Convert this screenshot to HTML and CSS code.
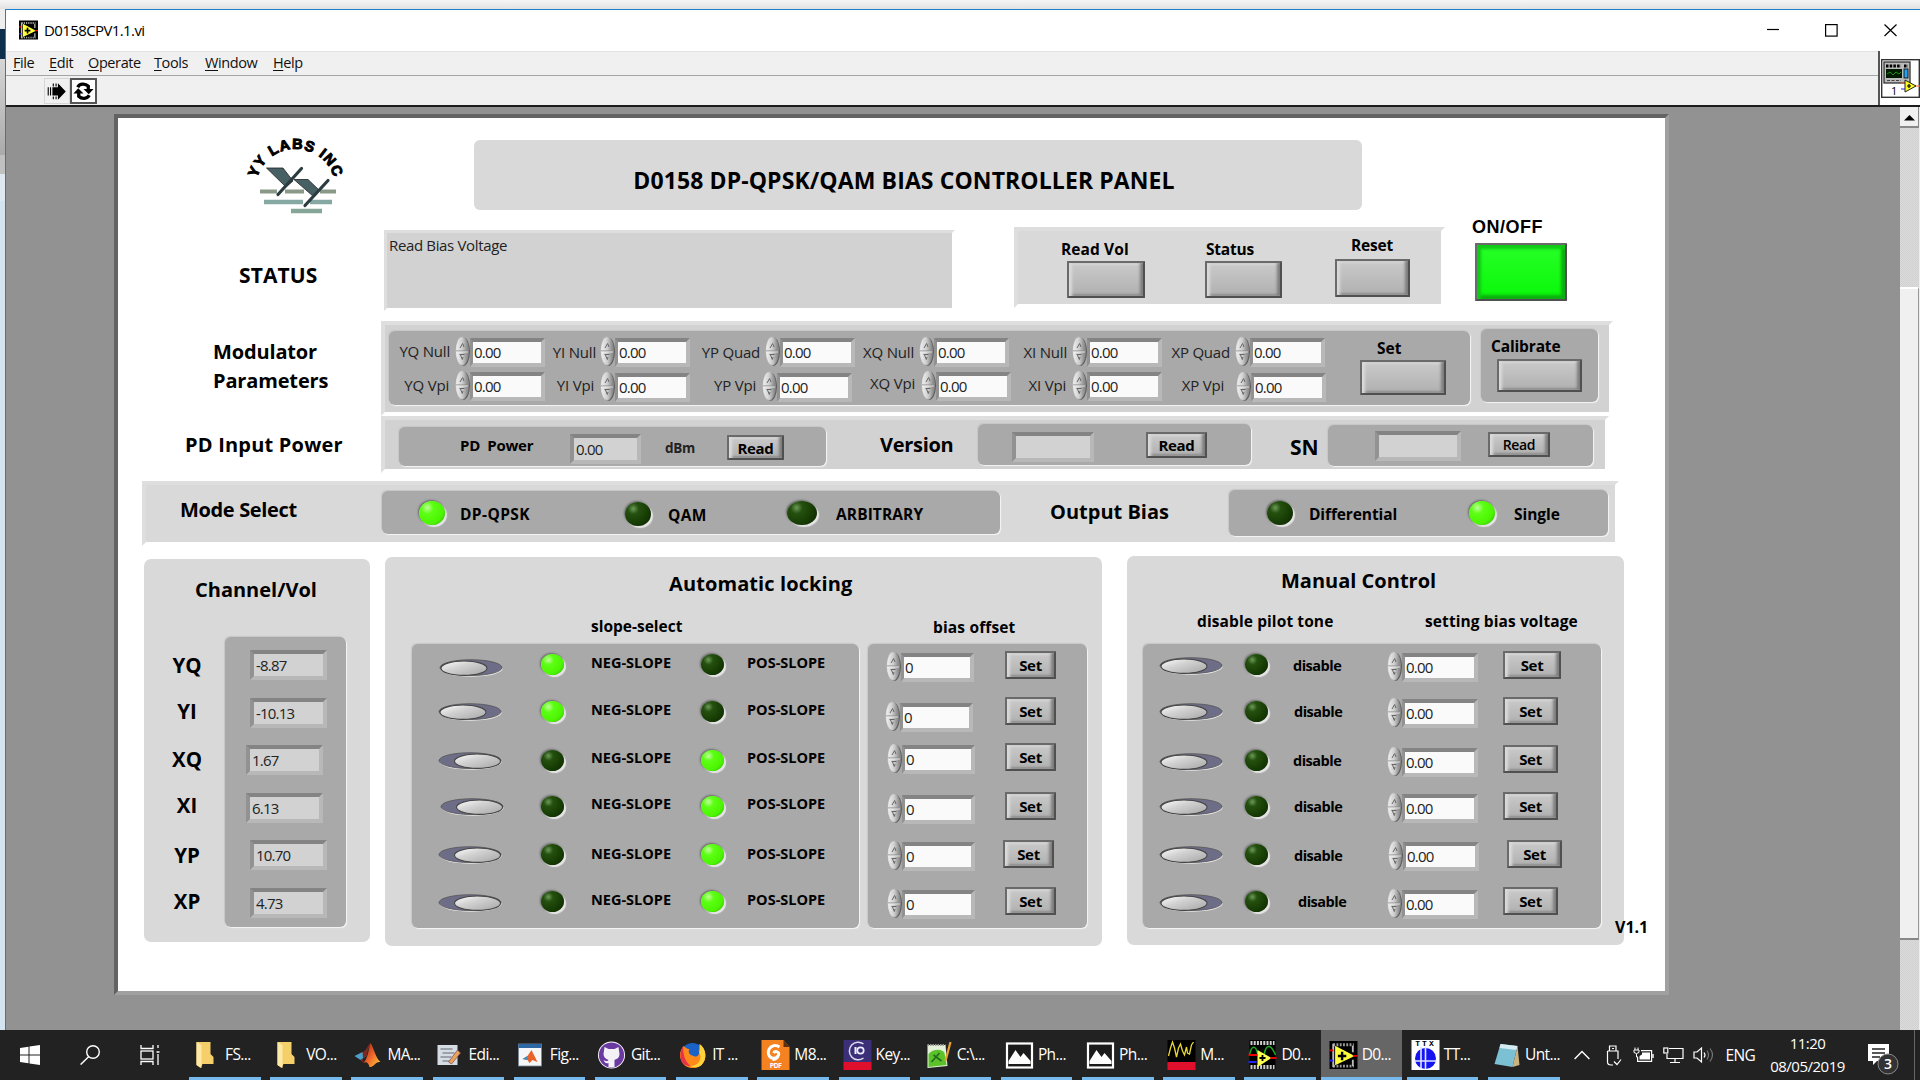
FILE: index.html
```html
<!DOCTYPE html>
<html lang="en">
<head>
<meta charset="utf-8">
<title>D0158CPV1.1.vi</title>
<link rel="stylesheet" href="styles.css">
</head>
<body>
<svg class="defs" aria-hidden="true">
  <defs>
    <linearGradient id="metal" x1="0" y1="0" x2="1" y2="0"><stop offset="0" stop-color="#f2f2f2"/><stop offset=".5" stop-color="#d0d0d0"/><stop offset="1" stop-color="#7c7c7c"/></linearGradient>
    <linearGradient id="knob" x1="0" y1="0" x2="1" y2="1"><stop offset="0" stop-color="#ffffff"/><stop offset=".4" stop-color="#d2d2d2"/><stop offset="1" stop-color="#a6a6a6"/></linearGradient>
    <linearGradient id="flame" x1="0" y1="0" x2="1" y2="1"><stop offset="0" stop-color="#8c2318"/><stop offset=".5" stop-color="#f0642a"/><stop offset="1" stop-color="#ffd23c"/></linearGradient>
    <symbol id="spin" viewBox="0 0 15 30">
      <ellipse cx="8.2" cy="15.6" rx="6.8" ry="14.2" fill="#5c5c5c"/>
      <ellipse cx="7" cy="15" rx="6.5" ry="14.4" fill="url(#metal)" stroke="#a0a0a0" stroke-width=".6"/>
      <path d="M1 15H13" stroke="#8a8a8a"/><path d="M1 16H13" stroke="#f4f4f4" stroke-width=".8"/>
      <path d="M5 12L7.6 7.5L9 11" fill="none" stroke="#666" stroke-width="1"/>
      <path d="M4.5 18.500H9.500M5.500 19L7.3 23.5L8 21" fill="none" stroke="#666" stroke-width="1"/>
    </symbol>
    <symbol id="sw-left" viewBox="0 0 64 18">
      <ellipse cx="32.6" cy="9.8" rx="31" ry="7.9" fill="#e8e8e8"/>
      <ellipse cx="32" cy="8.6" rx="31" ry="7.9" fill="#6d6d88" stroke="#555" stroke-width=".8"/>
      <ellipse cx="25" cy="9.2" rx="23" ry="7.2" fill="url(#knob)" stroke="#444" stroke-width="1.1"/>
    </symbol>
    <symbol id="sw-right" viewBox="0 0 64 18">
      <ellipse cx="32.6" cy="9.8" rx="31" ry="7.9" fill="#e8e8e8"/>
      <ellipse cx="32" cy="8.6" rx="31" ry="7.9" fill="#6d6d88" stroke="#555" stroke-width=".8"/>
      <ellipse cx="39.5" cy="9.2" rx="23" ry="7.2" fill="url(#knob)" stroke="#444" stroke-width="1.1"/>
    </symbol>
    <symbol id="vi" viewBox="0 0 30 30">
      <rect width="30" height="30" fill="#000"/>
      <path d="M4 4H26M4 27H26" stroke="#999" stroke-width="3" stroke-dasharray="2 1.5"/>
      <path d="M4 3V28M25 5V12M25 20V27" stroke="#bbb" stroke-width="2"/>
      <path d="M6 5V26L27 16Z" fill="#ffff3c"/>
      <path d="M9 16H18M13.500 11.500V20.500" stroke="#000" stroke-width="2.600"/>
      <path d="M25 16H30M0 10H4" stroke="#e00" stroke-width="2"/><path d="M0 21H4" stroke="#22f" stroke-width="2"/>
    </symbol>
    <symbol id="folder" viewBox="0 0 20 28"><path d="M1 1H15V13L18 16V23L15 23H7L5 27L1 24Z" fill="#f5cf6a"/><path d="M1 1L6 4V27L1 24Z" fill="#fde9a5"/></symbol>
    <symbol id="matlab" viewBox="0 0 26 24"><path d="M0 13L8 9L12 13L6 17Z" fill="#4aa0c8"/><path d="M8 9C12 8 13 2 16 0L12 13L6 17L9 20Z" fill="#7a2a20"/><path d="M16 0C19 4 21 15 26 19C21 18 20 24 15 24C14 20 12 18 9 20C14 14 14 6 16 0Z" fill="url(#flame)"/></symbol>
    <symbol id="photo" viewBox="0 0 28 28"><rect x="1.500" y="2.500" width="25" height="24" fill="#1b1b1b" stroke="#fff" stroke-width="2.200"/><path d="M3 20L10 9L15 16L18 12L25 20V23H3Z" fill="#fff"/></symbol>
  </defs>
</svg>

<div class="desktop">
  <div class="behind"></div>
  <main class="window">
    <header class="titlebar">
      <svg class="app-icon"><use href="#vi"/></svg>
      <span class="wtitle">D0158CPV1.1.vi</span>
      <svg class="winbtns" viewBox="0 0 130 14" fill="none" stroke="#000" stroke-width="1.200"><path d="M0 6.500H12"/><rect x="58.600" y="1.600" width="11.500" height="11.500"/><path d="M117.500 1.500L129.500 13M129.500 1.500L117.500 13"/></svg>
    </header>
    <div class="chrome">
      <div class="bars">
        <nav class="menu">
          <span class="m1"><u>F</u>ile</span><span class="m2"><u>E</u>dit</span><span class="m3"><u>O</u>perate</span><span class="m4"><u>T</u>ools</span><span class="m5"><u>W</u>indow</span><span class="m6"><u>H</u>elp</span>
        </nav>
        <div class="toolbar">
          <svg class="tool" viewBox="0 0 26 26"><path d="M3.500 9V18M6 9V18M9 5V8M12 5V8M9 19V22M12 19V22" stroke="#000" stroke-width="1.200"/><path d="M8 9H14V4.500L22.500 13.500L14 22.500V18H8Z" fill="#000"/></svg>
          <svg class="tool pressed" viewBox="0 0 24 23"><path d="M6 7.500C8 3.500 14 3.500 17 6.500V10" fill="none" stroke="#000" stroke-width="3.400"/><path d="M12 9.500H22.500L17.500 15Z"/><path d="M18 16C16 20 10 20 7 17V13" fill="none" stroke="#000" stroke-width="3.400"/><path d="M1.500 14H12L6.500 8.500Z"/></svg>
        </div>
      </div>
      <div class="vi-pane">
        <svg viewBox="0 0 39 39"><rect x=".7" y=".7" width="37.600" height="37.600" fill="#fff" stroke="#333" stroke-width="1.400"/><rect x="3" y="3" width="26" height="21" fill="#bbb" stroke="#333" stroke-width="1.300"/><path d="M5 7H20M23 7H27" stroke="#000" stroke-width="3" stroke-dasharray="2.500 1.200"/><rect x="5" y="10" width="16" height="9" fill="#001a00"/><path d="M6 15L9 13L12 16L15 13L18 15L20 13" fill="none" stroke="#1b8f1b" stroke-width="1"/><rect x="23" y="10" width="4" height="9" fill="#26a0ee" stroke="#000" stroke-width=".8"/><path d="M6 21.500H20" stroke="#444" stroke-dasharray="3 1.500"/><path d="M20 24H25M34 27H39" stroke="#f62"/><path d="M20 30H25" stroke="#22f"/><path d="M24 21V33L35 27Z" fill="#ffff1e" stroke="#222"/><path d="M26 27H30M28 25V29" stroke="#000" stroke-width="1.200"/><text x="10" y="36" class="vi-num">1</text></svg>
      </div>
    </div>

    <div class="client">
      <div class="canvas">
        <section class="front">
          <div class="row head">
            <svg class="logo" viewBox="236 128 122 92">
              <path id="arc" d="M257 178A40 40 0 0 1 334.500 180" fill="none"/>
              <text class="logo-text"><textPath href="#arc" textLength="103">YY LABS INC</textPath></text>
              <path d="M260 191.500H277M285 191.500H304M320 191.500H336" stroke="#8b9a88" stroke-width="4"/>
              <path d="M264 202H303M310 202H332" stroke="#86a8a2" stroke-width="4.500"/>
              <path d="M291 211H322" stroke="#86a69a" stroke-width="4.500"/>
              <path d="M266.500 168H283L293 181L286 187Z" fill="#466064" stroke="#222" stroke-width=".8"/>
              <path d="M294 179.500H308L319 190L314 197Z" fill="#466064" stroke="#222" stroke-width=".8"/>
              <path d="M301.500 168.500L278 194.500M328 180.500L305 205.500" stroke="#2b3c40" stroke-width="3.200" stroke-linecap="round"/>
            </svg>
            <h1 class="title-box"><span class="big">D0158 DP-QPSK/QAM BIAS CONTROLLER PANEL</span></h1>
          </div>

          <div class="row stat">
            <h2 class="lab-status">STATUS</h2>
            <div class="sunk status-text">Read Bias Voltage</div>
            <div class="sunk actions">
              <div class="act a1"><span>Read Vol</span><i class="btn"></i></div>
              <div class="act a2"><span>Status</span><i class="btn"></i></div>
              <div class="act a3"><span>Reset</span><i class="btn"></i></div>
            </div>
            <div class="power"><span>ON/OFF</span><i class="btn green"></i></div>
          </div>

          <div class="row">
            <h2 class="lab-mod">Modulator<br>Parameters</h2>
            <div class="sunk mod">
              <div class="well mod-well">
                <div class="params">
                  <div class="prow r1">
                    <label class="u1">YQ Null<span class="num"><svg><use href="#spin"/></svg><b>0.00</b></span></label>
                    <label class="u2">YI Null<span class="num"><svg><use href="#spin"/></svg><b>0.00</b></span></label>
                    <label>YP Quad<span class="num"><svg><use href="#spin"/></svg><b>0.00</b></span></label>
                    <label>XQ Null<span class="num"><svg><use href="#spin"/></svg><b>0.00</b></span></label>
                    <label>XI Null<span class="num"><svg><use href="#spin"/></svg><b>0.00</b></span></label>
                    <label>XP Quad<span class="num"><svg><use href="#spin"/></svg><b>0.00</b></span></label>
                  </div>
                  <div class="prow r2">
                    <label>YQ Vpi<span class="num"><svg><use href="#spin"/></svg><b>0.00</b></span></label>
                    <label>YI Vpi<span class="num dn1"><svg><use href="#spin"/></svg><b>0.00</b></span></label>
                    <label>YP Vpi<span class="num dn1"><svg><use href="#spin"/></svg><b>0.00</b></span></label>
                    <label class="u4">XQ Vpi<span class="num"><svg><use href="#spin"/></svg><b>0.00</b></span></label>
                    <label>XI Vpi<span class="num"><svg><use href="#spin"/></svg><b>0.00</b></span></label>
                    <label class="u6">XP Vpi<span class="num dn1"><svg><use href="#spin"/></svg><b>0.00</b></span></label>
                  </div>
                </div>
                <div class="act setmod"><span>Set</span><i class="btn"></i></div>
              </div>
              <div class="well cal-well"><div class="act cal"><span>Calibrate</span><i class="btn"></i></div></div>
            </div>
          </div>

          <div class="row">
            <h2 class="lab-pd">PD Input Power</h2>
            <div class="sunk pd">
              <div class="well w1"><span class="bl pdp">PD&nbsp; Power</span><span class="ind">0.00</span><span class="dbm">dBm</span><button class="btn">Read</button></div>
              <h2 class="lab-ver">Version</h2>
              <div class="well w2"><span class="ind"></span><button class="btn">Read</button></div>
              <h2 class="lab-sn">SN</h2>
              <div class="well w3"><span class="ind"></span><button class="btn">Read</button></div>
            </div>
          </div>

          <div class="row">
            <div class="sunk mode">
              <h2 class="lab-mode">Mode Select</h2>
              <div class="well mode-well">
                <i class="led on l1"></i><span class="bl t1">DP-QPSK</span>
                <i class="led l2"></i><span class="bl t2">QAM</span>
                <i class="led l3"></i><span class="bl t3">ARBITRARY</span>
              </div>
              <h2 class="lab-out">Output Bias</h2>
              <div class="well out-well">
                <i class="led l4"></i><span class="bl t4">Differential</span>
                <i class="led on l5"></i><span class="bl t5">Single</span>
              </div>
            </div>
          </div>

          <div class="row cards">
            <section class="card chan">
              <h2>Channel/Vol</h2>
              <div class="chan-body">
                <div class="names"><span>YQ</span><span>YI</span><span>XQ</span><span>XI</span><span>YP</span><span>XP</span></div>
                <div class="well vals"><span class="ind">-8.87</span><span class="ind">-10.13</span><span class="ind lf4">1.67</span><span class="ind lf4">6.13</span><span class="ind">10.70</span><span class="ind">4.73</span></div>
              </div>
            </section>

            <section class="card auto">
              <h2>Automatic locking</h2>
              <div class="subs"><h3 class="s1">slope-select</h3><h3 class="s2">bias offset</h3></div>
              <div class="wells">
                <div class="well slopes">
                  <div class="line"><svg class="sw dn2"><use href="#sw-left"/></svg><i class="led on"></i><span class="sl">NEG-SLOPE</span><i class="led"></i><span class="sl">POS-SLOPE</span></div>
                  <div class="line"><svg class="sw"><use href="#sw-left"/></svg><i class="led on dn1"></i><span class="sl dn1">NEG-SLOPE</span><i class="led dn1"></i><span class="sl dn1">POS-SLOPE</span></div>
                  <div class="line"><svg class="sw"><use href="#sw-right"/></svg><i class="led dn1"></i><span class="sl">NEG-SLOPE</span><i class="led on dn1"></i><span class="sl">POS-SLOPE</span></div>
                  <div class="line"><svg class="sw rt2"><use href="#sw-right"/></svg><i class="led dn1"></i><span class="sl">NEG-SLOPE</span><i class="led on dn1"></i><span class="sl">POS-SLOPE</span></div>
                  <div class="line"><svg class="sw up1"><use href="#sw-right"/></svg><i class="led"></i><span class="sl dn1">NEG-SLOPE</span><i class="led on"></i><span class="sl dn1">POS-SLOPE</span></div>
                  <div class="line"><svg class="sw"><use href="#sw-right"/></svg><i class="led"></i><span class="sl">NEG-SLOPE</span><i class="led on"></i><span class="sl">POS-SLOPE</span></div>
                </div>
                <div class="well offsets">
                  <div class="line"><span class="num"><svg><use href="#spin"/></svg><b>0</b></span><button class="btn">Set</button></div>
                  <div class="line"><span class="num dn4"><svg><use href="#spin"/></svg><b>0</b></span><button class="btn">Set</button></div>
                  <div class="line"><span class="num up3r"><svg><use href="#spin"/></svg><b>0</b></span><button class="btn up3">Set</button></div>
                  <div class="line"><span class="num dn1r"><svg><use href="#spin"/></svg><b>0</b></span><button class="btn">Set</button></div>
                  <div class="line"><span class="num up1r"><svg><use href="#spin"/></svg><b>0</b></span><button class="btn up1l">Set</button></div>
                  <div class="line"><span class="num rt1"><svg><use href="#spin"/></svg><b>0</b></span><button class="btn up1">Set</button></div>
                </div>
              </div>
            </section>

            <section class="card manual">
              <h2>Manual Control</h2>
              <div class="subs"><h3 class="s3">disable pilot tone</h3><h3 class="s4">setting bias voltage</h3></div>
              <div class="well man-well">
                <div class="line"><svg class="sw"><use href="#sw-left"/></svg><i class="led"></i><span class="dis">disable</span><span class="num"><svg><use href="#spin"/></svg><b>0.00</b></span><button class="btn wide">Set</button></div>
                <div class="line"><svg class="sw"><use href="#sw-left"/></svg><i class="led dn1"></i><span class="dis rt1">disable</span><span class="num"><svg><use href="#spin"/></svg><b>0.00</b></span><button class="btn">Set</button></div>
                <div class="line"><svg class="sw dn1"><use href="#sw-left"/></svg><i class="led dn1"></i><span class="dis">disable</span><span class="num"><svg><use href="#spin"/></svg><b>0.00</b></span><button class="btn up1">Set</button></div>
                <div class="line"><svg class="sw"><use href="#sw-left"/></svg><i class="led dn1"></i><span class="dis rt1">disable</span><span class="num"><svg><use href="#spin"/></svg><b>0.00</b></span><button class="btn">Set</button></div>
                <div class="line"><svg class="sw up1"><use href="#sw-left"/></svg><i class="led"></i><span class="dis rt1">disable</span><span class="num up1r"><svg><use href="#spin"/></svg><b>0.00</b></span><button class="btn rt4">Set</button></div>
                <div class="line"><svg class="sw"><use href="#sw-left"/></svg><i class="led"></i><span class="dis rt5">disable</span><span class="num"><svg><use href="#spin"/></svg><b>0.00</b></span><button class="btn up1">Set</button></div>
              </div>
            </section>
            <span class="ver">V1.1</span>
          </div>
        </section>
      </div>
      <div class="scroll"><div class="up"><svg viewBox="0 0 19 21"><path d="M4 13.500L9.500 8L15 13.500Z"/></svg></div><div class="track t"></div><div class="thumb"></div><div class="track"></div></div>
    </div>
  </main>

  <footer class="taskbar">
    <svg class="sys s-start" viewBox="0 0 20 20" fill="#fff"><path d="M0 3L8.500 1.800V9.500H0ZM9.500 1.600L20 0V9.500H9.500ZM0 10.500H8.500V18.200L0 17ZM9.500 10.500H20V20L9.500 18.400Z"/></svg>
    <svg class="sys s-find" viewBox="0 0 20 20" fill="none" stroke="#fff" stroke-width="1.400"><circle cx="13" cy="7" r="6.300"/><path d="M8.600 11.800L.6 19.600"/></svg>
    <svg class="sys s-view" viewBox="0 0 20 20" fill="none" stroke="#fff" stroke-width="1.300"><path d="M1 0V3.500H13V0M1 20V16.500H13V20M18 0V3M18 9V20M16.500 7H19.500"/><rect x="1" y="6" width="12" height="8"/></svg>
    <div class="apps">
      <div class="app"><svg><use href="#folder"/></svg>FS...</div>
      <div class="app"><svg><use href="#folder"/></svg>VO...</div>
      <div class="app"><svg class="md"><use href="#matlab"/></svg>MA...</div>
      <div class="app"><svg viewBox="0 0 28 28"><rect x="2" y="4" width="20" height="20" fill="#d4dde2"/><path d="M5 8H17M7 12H19M5 16H16M7 20H14" stroke="#667" stroke-width="1.200"/><path d="M13 21L22 9L25 12L16 23Z" fill="#e8a55a" stroke="#845" stroke-width=".7"/></svg>Edi...</div>
      <div class="app"><svg viewBox="0 0 28 28"><rect x="2" y="3" width="23" height="22" fill="#f4f6f7" stroke="#789" stroke-width=".8"/><rect x="2" y="3" width="23" height="4" fill="#2d68a4"/><path d="M6 18L11 15L15 9L21 21L16 19L13 22L11 19Z" fill="#e8622a"/><path d="M6 18L11 15L11 19Z" fill="#3a8fc0"/></svg>Fig...</div>
      <div class="app"><svg viewBox="0 0 28 28"><circle cx="14" cy="14" r="13.500" fill="#fff"/><circle cx="14" cy="14" r="12.600" fill="#6a3aa0"/><path d="M7 6L11 8H17L21 6L22 13C22 17 19 18 17 19V26H11V22C8 23 7 21 6 19C8 20 10 21 11 19C8 18 6 16 6 13Z" fill="#f3f0f6"/></svg>Git...</div>
      <div class="app"><svg viewBox="0 0 28 28"><circle cx="14" cy="14" r="12" fill="#1a62c8"/><path d="M5 5C8 7 8 8 11 8C9 11 11 14 15 15C19 17 22 13 20 9C22 10 23 11 23 7L21 3C28 8 29 18 23 24C17 29 6 28 3 20C0 14 2 9 5 5Z" fill="#ff8a1a"/><path d="M21 3C28 8 29 18 23 24C20 27 15 27 12 25C20 25 24 18 21 12Z" fill="#ffd43a"/><path d="M3 20C1 14 2 9 5 5C4 12 6 20 12 25C8 25 4 23 3 20Z" fill="#e8304a"/></svg>IT ...</div>
      <div class="app"><svg viewBox="0 0 28 28"><path d="M0 -1H22L28 6V29H0Z" fill="#f58220"/><path d="M22 -1V6H28" fill="#5a3010"/><path d="M18 6C12 2 6 7 7 13C8 18 15 19 17 14C18 11 14 9 12 12" fill="none" stroke="#fff" stroke-width="3"/><path d="M17 13C17 17 15 19 11 19" fill="none" stroke="#fff" stroke-width="2"/><text x="14" y="27" class="pdf">PDF</text></svg>M8...</div>
      <div class="app"><svg viewBox="0 0 28 28"><rect y="-1" width="28" height="22" fill="#3b2f78"/><rect y="21" width="28" height="8" fill="#e0102c"/><path d="M20 3A8.800 8.800 0 1 0 20 17" fill="none" stroke="#dde" stroke-width="1.500"/><path d="M12 6V13" stroke="#eef" stroke-width="2"/><circle cx="17" cy="9.500" r="3.200" fill="none" stroke="#eef" stroke-width="1.700"/></svg>Key...</div>
      <div class="app"><svg viewBox="0 0 28 28"><path d="M3 4H21L23 25L3 27Z" fill="#e4f0d8"/><path d="M4 13C8 8 17 7 20 12L22 24L4 26Z" fill="#5cc22c"/><path d="M3 4H21" stroke="#999" stroke-width="2" stroke-dasharray="1.500 1"/><path d="M7 21L15 12M9 14L17 20" stroke="#226b1a" stroke-width="1.600"/><path d="M26 1L21 20" stroke="#e8a030" stroke-width="2.200"/></svg>C:\...</div>
      <div class="app"><svg><use href="#photo"/></svg>Ph...</div>
      <div class="app"><svg><use href="#photo"/></svg>Ph...</div>
      <div class="app"><svg viewBox="0 0 28 28"><rect y="-1" width="28" height="22" fill="#000"/><rect y="21" width="28" height="8" fill="#e0102c"/><path d="M1 15L3 7L5 1L7 7L9 16L11 7L13 3L15 10L17 14L19 6L20 12L22 13L24 4L26 1" fill="none" stroke="#e8d830" stroke-width="1.300"/></svg>M...</div>
      <div class="app"><svg viewBox="0 0 28 28"><rect x="1" y="-1" width="26" height="29" fill="#000"/><path d="M2 2H26M2 26H26" stroke="#ccc" stroke-width="4" stroke-dasharray="2 1.200"/><path d="M1 14C3 4 7 4 9 12S14 22 16 12S23 4 27 14" fill="none" stroke="#1ea81e" stroke-width="1.500"/><path d="M9 9V26L23 17Z" fill="#ffff50"/><path d="M11 17H17M14 14V20" stroke="#000" stroke-width="1.800"/><path d="M0 14H9M22 17H28" stroke="#e00" stroke-width="2"/><path d="M0 21H8" stroke="#22f" stroke-width="2"/></svg>D0...</div>
      <div class="app active"><svg><use href="#vi"/></svg>D0...</div>
      <div class="app"><svg viewBox="0 0 28 28"><rect y="-1" width="28" height="30" fill="#fff"/><text x="14" y="5" class="ttx">TTX</text><circle cx="14" cy="17.500" r="10.500" fill="#1414f0"/><path d="M9.500 6V28M14 6V28M3 20H25" stroke="#dfe4ff" stroke-width="1.600"/></svg>TT...</div>
      <div class="app"><svg viewBox="0 0 28 28"><path d="M8 3L25 5L20 26L2 23Z" fill="#7cc0d4"/><path d="M8 3L25 5L24 9L7 7Z" fill="#d4ecf2"/><path d="M25 5L27 24L20 26Z" fill="#c9b37e"/></svg>Unt...</div>
    </div>
    <div class="tray">
      <svg class="chev" viewBox="0 0 16 10" fill="none" stroke="#fff" stroke-width="1.400"><path d="M.6 9L8 1.400L15.400 9"/></svg>
      <svg class="usb" viewBox="0 0 16 21" fill="none" stroke="#fff" stroke-width="1.200"><path d="M3.500 6V1H10V6M1.500 6H12V14M1.500 6V17C1.500 19 3 20 5 20H7"/><path d="M6 3.500H8"/><path d="M8 16.500L11 19.500L15 14.500"/></svg>
      <svg class="bat" viewBox="0 0 21 16"><path d="M8 3.600H18.600V14.400H4.600V10" fill="none" stroke="#fff" stroke-width="1.200"/><path d="M9 5.500H17V12.500H6.500V9L9 7.500Z" fill="#fff"/><path d="M20 7V11" stroke="#fff" stroke-width="1.400"/><path d="M1 3H6V5.500Q3.500 7.500 1 5.500ZM2 .5V3M5 .5V3M3.500 7V10H5" fill="none" stroke="#fff" stroke-width="1"/></svg>
      <svg class="net" viewBox="0 0 21 18" fill="none" stroke="#fff" stroke-width="1.200"><path d="M6 2.500H20V12.500H4V8M12 12.500V16.500M7 16.500H17"/><rect x=".8" y="2" width="4" height="5"/></svg>
      <svg class="vol" viewBox="0 0 22 18" fill="none" stroke="#fff" stroke-width="1.200"><path d="M1 6H4L8.500 2V16L4 12H1Z"/><path d="M11 6.500Q13 9 11 11.500"/><path d="M14 4.500Q17 9 14 13.500M17 2.500Q22 9 17 15.500" stroke="#777"/></svg>
      <span class="lang">ENG</span>
      <div class="clock"><span>11:20</span><span>08/05/2019</span></div>
      <svg class="note" viewBox="0 0 32 32"><path d="M0 0H21V17H9L5 21V17H0Z" fill="#fff"/><path d="M4 5H17M4 9H17M4 13H12" stroke="#222" stroke-width="1.300"/><circle cx="20" cy="20" r="10" fill="#333" stroke="#888" stroke-width="1"/><text x="20" y="25" class="n3">3</text></svg>
    </div>
  </footer>
</div>
</body>
</html>
```
FILE: styles.css
```css
* { box-sizing: border-box; }
html, body { margin: 0; height: 100%; }
body {
  width: 1920px; height: 1080px; overflow: hidden;
  font-family: "Open Sans", "Noto Sans", sans-serif; font-size: 15px; line-height: 20px; color: #000;
}
h1, h2, h3 { margin: 0; white-space: nowrap; }
svg { display: block; flex: none; }
.defs { position: absolute; width: 0; height: 0; }

.desktop { display: grid; grid-template: 9px 1021px 50px / 5px 1915px; width: 1920px; height: 1080px; background: linear-gradient(#f6f6f6, #e2e2e2 9px); }
.behind { grid-row: 2; grid-column: 1; background: linear-gradient(#eee 20px, #0d2f4c 20px, #0d2f4c 50px, #d6d6d6 50px, #aaa 146px, #c0c0c0 146px, #c0c0c0 165px, #dfe8f0 165px, #dfe8f0 192px, #d3e3f0 192px); }
.window { grid-row: 2; grid-column: 2; display: flex; flex-direction: column; border: solid #1c7fd0; border-width: 1px 0 0 1px; background: #fff; }

/* window chrome */
.titlebar { display: flex; height: 41px; align-items: flex-start; padding-left: 13px; }
.app-icon { width: 19px; height: 20px; margin-top: 10px; }
.wtitle { margin: 10px 0 0 6px; font-size: 15px; letter-spacing: -.6px; }
.winbtns { width: 130px; height: 14px; margin: 13px 23px 0 auto; }
.chrome { display: flex; height: 56px; border-bottom: 2px solid #1c1c1c; background: #f0f0f0; }
.bars { flex: 1; border-top: 1px solid #e2e2e2; }
.menu { display: flex; height: 24px; border-bottom: 1px solid #a6a6a6; padding: 1px 0 0 1px; font-size: 14.5px; color: #111; }
.menu span { letter-spacing: -.4px; white-space: nowrap; }
.m1 { margin-left: 6px; width: 36px; } .m2 { width: 39px; } .m3 { width: 66px; } .m4 { width: 51px; } .m5 { width: 68px; }
.menu u { text-underline-offset: 2px; }
.toolbar { display: flex; padding: 2px 0 0 38px; }
.tool { width: 26px; height: 26px; border: 1px solid #d6d6d6; }
.pressed { width: 27px; border: 2px solid #555; background: #fff; }
.vi-pane { width: 42px; border-left: 2px solid #555; background: #fff; padding: 8px 0 0 1px; }
.vi-pane svg { width: 39px; height: 39px; }
.vi-num { font: 11px "Open Sans", sans-serif; }

.client { display: flex; flex: 1; background: #929292; }
.canvas { flex: 1; padding: 7px 0 0 108px; }
.front { width: 1555px; height: 881px; border: 4px solid; border-color: #636363 #a0a0a0 #a0a0a0 #636363; background: #fff; display: flex; flex-direction: column; }
.scroll { display: flex; flex-direction: column; width: 20px; border-right: 1px solid #eee; }
.up { height: 21px; background: #f0f0f0; border-bottom: 2px solid #888; border-right: 1px solid #888; }
.up svg { width: 19px; height: 21px; }
.track { flex: 1; background: repeating-conic-gradient(#dcdcdc 0 25%, #d0d0d0 0 50%) 0 0 / 2px 2px; }
.track.t { flex: none; height: 159px; }
.thumb { height: 653px; background: #f0f0f0; border: solid; border-width: 2px 1px 2px 0; border-color: #fff #999 #888 #fff; }

/* shared front-panel parts */
.row { display: flex; align-items: flex-start; flex: none; }
h2, .big { font-size: 20px; line-height: 28px; font-weight: 700; letter-spacing: 0; }
h3, .bl, .act span { font-size: 15.5px; line-height: 20px; font-weight: 700; letter-spacing: 0; white-space: nowrap; }
.bl { letter-spacing: -.05px; }
.sunk { display: flex; align-items: flex-start; border: 4px solid; border-color: #dedede #fff #fff #dedede; background: #d2d2d2; }
.well { display: flex; align-items: flex-start; background: #a9a9a9; border-radius: 6px; box-shadow: 1px 1px 1px #f6f6f6, -1px -1px 1px #c6c6c6; }
.btn {
  display: flex; align-items: center; justify-content: center; flex: none; padding: 0; margin: 0;
  border: 2px solid; border-color: #6a6a6a #505050 #505050 #6a6a6a; border-radius: 1px; color: #000;
  background: linear-gradient(#cacaca, #b0b0b0);
  box-shadow: inset 4px 0 3px -1px #dadada, inset -4px 0 3px -1px #7c7c7c, inset 0 3px 2px -1px #dadada, inset 0 -3px 2px -1px #8c8c8c;
  font: 700 15px/18px "Open Sans", sans-serif; letter-spacing: -.35px;
}
.green { background: linear-gradient(#28ff28, #08f808); box-shadow: inset 4px 4px 3px #10c818, inset -4px -4px 3px #0cae10; }
.led {
  width: 23px; height: 21px; border-radius: 50%; flex: none;
  background: radial-gradient(circle at 32% 28%, #6c9a58 0, #25500f 22%, #163c04 60%, #0c2200 100%);
  box-shadow: -1px -1px 2px #6a6a6a, 2px 2px 1px #e6e6e6;
}
.led.on { background: radial-gradient(circle at 32% 28%, #c2ff9a 0, #5cff14 25%, #4cf500 65%, #2fae00 100%); }
.num { display: flex; width: 90px; height: 30px; flex: none; }
.num svg { width: 15px; height: 30px; }
.num b, .ind { display: block; border: 4px solid; border-color: #848484 #b8b8b8 #b8b8b8 #929292; font-size: 15px; letter-spacing: -.8px; font-weight: 400; color: #222; white-space: nowrap; }
.num b { flex: 1; height: 29px; margin-top: 2px; padding-left: 1px; background: #fafafa; line-height: 21px; border-left-width: 3px; }
.ind { flex: none; height: 30px; padding-left: 2px; background: #d2d2d2; line-height: 22px; }
.up1 { translate: 0 -1px; } .up3 { translate: 0 -3px; } .up1l { translate: -2px -1px; }
.up1r { translate: 1px -1px; } .up3r { translate: 1px -3px; } .dn1r { translate: 1px 1px; }
.dn1 { translate: 0 1px; } .dn2 { translate: 1px 2px; } .dn4 { translate: -1px 4px; }
.rt1 { translate: 1px 0; } .rt2 { translate: 2px 0; } .rt4 { translate: 4px -1px; } .rt5 { translate: 5px -1px; } .lf4 { translate: -4px 0; }

/* header */
.head { height: 109px; }
.logo { width: 122px; height: 92px; margin: 10px 0 0 118px; }
.logo-text { font: 700 14.5px "Liberation Sans", sans-serif; stroke: #000; stroke-width: 1px; }
.title-box { width: 888px; height: 70px; margin: 22px 0 0 116px; padding: 26px 28px 0 0; text-align: center; background: #d9d9d9; border-radius: 6px; line-height: 28px; }
.title-box .big { display: block; font-size: 23px; letter-spacing: .1px; }

.stat { height: 94px; }
.lab-status { width: 267px; padding: 34px 0 0 121px; font-size: 21px; letter-spacing: .1px; }
.status-text { width: 571px; height: 81px; margin: 3px 0 0 -1px; padding: 2px 0 0 2px; letter-spacing: -.35px; color: #222; border-width: 3px; }
.actions { width: 431px; height: 81px; margin-left: 59px; background: #d9d9d9; }
.act { display: flex; flex-direction: column; flex: none; }
.a1 { margin: 8px 0 0 49px; } .a2 { margin: 8px 0 0 60px; } .a3 { margin: 4px 0 0 53px; }
.a1 .btn { width: 78px; height: 37px; margin-top: 2px; }
.a1 span { margin-left: -6px; letter-spacing: .1px; }
.a2 .btn { width: 77px; height: 37px; margin-top: 2px; }
.a2 span { margin-left: 1px; letter-spacing: -.2px; }
.a3 .btn { width: 75px; height: 38px; margin-top: 4px; }
.a3 span { margin-left: 16px; letter-spacing: -.2px; }
.power { margin: -11px 0 0 27px; }
.power span { font: 700 18px/22px "Liberation Sans", sans-serif; letter-spacing: .5px; }
.power .btn { width: 92px; height: 58px; margin: 5px 0 0 3px; }

/* modulator */
.lab-mod { width: 263px; padding: 16px 0 0 95px; line-height: 29px; letter-spacing: -.15px; }
.mod { width: 1232px; height: 95px; }
.mod-well { width: 1081px; height: 74px; margin: 6px 0 0 4px; }
.params { width: 937px; padding-top: 5px; }
.prow { display: grid; height: 34px; }
.prow label { display: flex; justify-content: flex-end; gap: 5px; line-height: 33px; white-space: nowrap; letter-spacing: -.2px; color: #222; }
.prow .u2 { gap: 4px; } .prow .u1 { line-height: 30px; }
.r1 { grid-template-columns: 156px 145px 165px 154px 153px 163px; }
.r2 { grid-template-columns: 156px 145px 162px 159px 151px 164px; }
.r2 label { line-height: 30px; gap: 6px; }
.r2 .u4 { line-height: 27px; }
.r2 .u6 { gap: 12px; }
.setmod { margin: 7px 0 0 34px; }
.setmod .btn { width: 86px; height: 35px; margin-top: 2px; }
.setmod span { margin-left: 17px; }
.cal-well { width: 117px; height: 73px; margin: 4px 0 0 11px; }
.cal { margin: 7px 0 0 16px; }
.cal span { margin-left: -6px; letter-spacing: -.15px; }
.cal .btn { width: 85px; height: 33px; margin-top: 3px; }

/* PD input power */
.lab-pd { width: 263px; padding: 15px 0 0 67px; letter-spacing: .2px; }
.pd { width: 1228px; height: 57px; margin-bottom: 8px; }
.w1 { width: 427px; height: 39px; margin: 7px 0 0 14px; }
.pdp { width: 110px; margin: 8px 0 0 61px; font-size: 15px; letter-spacing: -.25px; }
.w1 .ind { width: 71px; margin-top: 7px; }
.dbm { width: 62px; margin: 12px 0 0 24px; font-size: 13.5px; line-height: 18px; font-weight: 700; letter-spacing: -.3px; color: #222; }
.w1 .btn { width: 57px; height: 25px; margin-top: 8px; }
.lab-ver { width: 152px; padding: 11px 0 0 54px; letter-spacing: -.3px; }
.w2 { width: 273px; height: 41px; margin-top: 4px; }
.w2 .ind { width: 82px; margin: 8px 0 0 34px; }
.w2 .btn { width: 61px; height: 26px; margin: 8px 0 0 52px; }
.lab-sn { width: 77px; padding: 13px 0 0 39px; font-size: 21px; }
.w3 { width: 265px; height: 41px; margin-top: 5px; }
.w3 .ind { width: 86px; margin: 6px 0 0 47px; }
.w3 .btn { width: 62px; height: 25px; margin: 7px 0 0 27px; font-size: 14px; font-weight: 600; }

/* mode */
.mode { width: 1477px; height: 65px; margin: 0 0 10px 24px; background: #d9d9d9; }
.lab-mode { width: 236px; padding: 11px 0 0 34px; letter-spacing: -.35px; }
.mode-well { width: 618px; height: 43px; margin-top: 6px; }
.mode-well .led, .out-well .led { width: 26px; height: 24px; margin-top: 10px; }
.mode-well .bl, .out-well .bl { margin-top: 13px; }
.mode-well .l1 { margin-left: 37px; }
.t1 { width: 180px; padding-left: 15px; letter-spacing: .4px; }
.mode-well .l2 { margin-top: 11px; }
.mode-well .t2 { width: 136px; padding-left: 17px; margin-top: 14px; letter-spacing: .3px; }
.mode-well .l3 { width: 30px; }
.t3 { padding-left: 19px; letter-spacing: .1px; }
.lab-out { width: 229px; padding: 13px 0 0 50px; }
.out-well { width: 379px; height: 46px; margin-top: 5px; }
.out-well .led { margin-top: 11px; }
.out-well .bl { margin-top: 14px; }
.out-well .l4 { margin-left: 38px; }
.t4 { width: 176px; padding-left: 16px; letter-spacing: -.1px; }
.t5 { padding-left: 19px; }

/* lower cards */
.card { background: #d9d9d9; border-radius: 7px; flex: none; }
.chan { width: 226px; height: 383px; margin: 3px 0 0 26px; }
.chan h2 { padding: 17px 0 0 51px; height: 78px; }
.chan-body { display: flex; }
.names { width: 81px; display: grid; grid-template-rows: 46px 48px 46px 50px 46px 46px; padding-top: 14px; text-align: center; font-size: 20.5px; line-height: 28px; font-weight: 700; }
.names span { width: 86px; }
.vals { width: 121px; height: 290px; flex-direction: column; justify-content: space-between; padding: 13px 0 9px 25px; }
.vals .ind { width: 77px; height: 30px; }
.auto { width: 717px; height: 389px; margin: 1px 0 0 15px; }
.auto h2 { padding: 13px 0 0 284px; height: 59px; letter-spacing: .1px; }
.subs { display: flex; height: 28px; }
.s1 { width: 342px; padding-left: 206px; } .s2 { padding: 1px 0 0 206px; letter-spacing: .15px; }
.wells { display: flex; padding-left: 27px; gap: 9px; }
.slopes, .offsets, .man-well { display: grid; grid-template-rows: 46px 49px 46px 49px 47px 47px; height: 284px; align-items: start; }
.slopes { width: 447px; } .offsets { width: 219px; }
.line { display: flex; align-items: flex-start; }
.line .led { margin-top: 10px; }
.sw { width: 64px; height: 18px; margin-top: 13px; }
.slopes .sw { margin-left: 26px; }
.slopes .led { margin-left: 39px; }
.slopes .sl { width: 80px; margin: 9px 0 0 28px; font-size: 14.5px; line-height: 20px; font-weight: 700; letter-spacing: 0; white-space: nowrap; }
.slopes .sl + .led { margin-left: 30px; }
.slopes .led + .sl { margin-left: 27px; }
.slopes .led ~ .led + .sl { margin-left: 23px; }
.offsets .num { width: 88px; margin: 7px 31px 0 18px; }
.line .btn { width: 51px; height: 28px; margin-top: 7px; }
.manual { width: 497px; height: 389px; margin: 0 0 0 25px; }
.manual h2 { padding: 11px 0 0 154px; height: 60px; }
.manual .subs h3 { margin-top: -5px; letter-spacing: .1px; }
.s3 { width: 298px; padding-left: 70px; }
.man-well { width: 458px; margin-left: 16px; }
.man-well .sw { margin-left: 16px; }
.man-well .led { margin-left: 22px; }
.dis { width: 94px; margin: 12px 0 0 25px; font-size: 14.5px; line-height: 20px; font-weight: 700; letter-spacing: -.5px; }
.man-well .num { width: 91px; margin: 7px 0 0 0; }
.man-well .btn { margin-left: 25px; width: 55px; }
.man-well .wide { width: 58px; }
.ver { margin: 361px 0 0 -9px; font-size: 16px; font-weight: 700; }

/* taskbar */
.taskbar { grid-row: 3; grid-column: 1 / 3; display: flex; background: #222; color: #fff; font-size: 15.5px; }
.sys { width: 20px; height: 20px; margin-top: 15px; }
.s-start { margin-left: 20px; } .s-find, .s-view { margin-left: 40px; }
.apps { display: flex; margin-left: 29px; gap: 9.7px; }
.app { display: flex; width: 71.5px; height: 50px; padding: 1px 0 0 2px; gap: 5px; align-items: center; border-bottom: 3px solid #76b9ed; letter-spacing: -.6px; white-space: nowrap; }
.app svg { width: 29px; height: 28px; margin-top: 2px; overflow: visible; }
.app:nth-child(n+8) { padding-left: 4px; gap: 4px; }
.app .md { height: 24px; }
.apps .active { width: 81.5px; margin: 0 -5px; padding-left: 8px; background: #666; }
.pdf { font: 700 7px "Open Sans", sans-serif; fill: #fff; text-anchor: middle; }
.ttx { font: 700 8px "Liberation Mono", monospace; text-anchor: middle; letter-spacing: 2px; }
.tray { display: flex; flex: 1; margin-left: 14px; border-right: 1px solid #666; margin-right: 5px; align-items: center; }
.chev { width: 16px; height: 10px; }
.usb { width: 16px; height: 21px; margin-left: 16px; }
.bat { width: 21px; height: 16px; margin-left: 11px; }
.net { width: 21px; height: 18px; margin-left: 9px; }
.vol { width: 22px; height: 18px; margin-left: 9px; }
.lang { width: 44px; padding-left: 11px; letter-spacing: -.6px; }
.clock { display: flex; flex-direction: column; width: 80px; margin-left: 9px; text-align: center; line-height: 23px; font-size: 15px; letter-spacing: -.5px; }
.note { width: 32px; height: 32px; margin: 10px 0 0 20px; }
.n3 { font: 600 14px "Open Sans", sans-serif; fill: #fff; text-anchor: middle; }
```
